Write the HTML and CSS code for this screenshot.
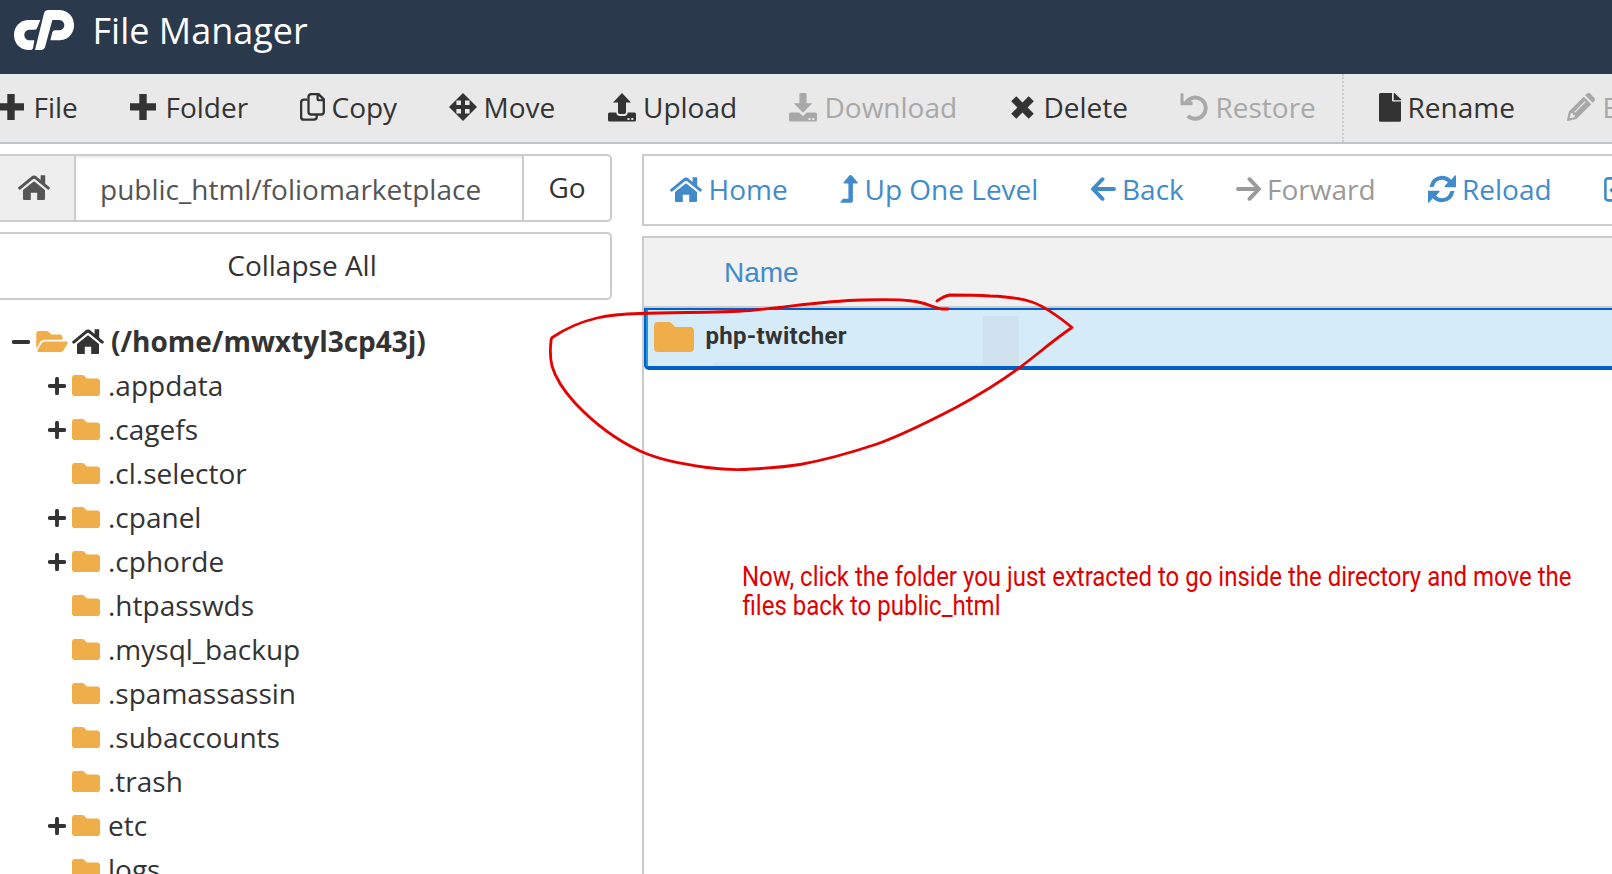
FILE: index.html
```html
<!DOCTYPE html>
<html lang="en">
<head>
<meta charset="utf-8">
<title>File Manager</title>
<link rel="stylesheet" href="styles.css">
</head>
<body>
<svg class="sprite" aria-hidden="true">
  <symbol id="home" viewBox="0 0 32 25"><path d="M1.7 13.1 14.2 2.8Q16 1.4 17.8 2.8L30.3 13.1" fill="none" stroke="currentColor" stroke-width="3" stroke-linecap="round"/><path d="M22.6.3h4.6v9.5l-4.6-3.7zM16 6.2 27 15v9q0 1-1 1h-6.8v-7.3h-6.4V25H6q-1 0-1-1v-9z"/></symbol>
  <symbol id="plus" viewBox="0 0 26 26"><path d="M9.3 0h7.4v9.3H26v7.2h-9.3V26H9.3v-9.5H0V9.3h9.3z"/></symbol>
  <symbol id="copy" viewBox="0 0 25 28"><g fill="none" stroke="currentColor" stroke-width="2.3"><path d="M7.5 6.6H4Q1.1 6.6 1.1 9.5v14.6q0 2.6 2.8 2.6h10q2.8 0 2.8-2.6v-2.3"/><path d="M11.4 1.2h7.2l5.2 5v12.5q0 2.8-2.8 2.8h-9.600q-2.900 0-2.900-2.800V4q0-2.800 2.900-2.800z"/></g><path d="M16.500 1.500h2.300l5 4.800v2h-5q-2.300 0-2.300-2.300z"/><path class="paper" d="M18.700 3v2.200q0 1 1 1h2.200z"/></symbol>
  <symbol id="move" viewBox="0 0 28 28"><path d="M14 0 28 14 14 28 0 14z"/><path class="hole" d="M7.400 7.400h4.600v4.600H7.400zM16 7.400h4.600v4.600H16zM7.400 16h4.600v4.600H7.400zM16 16h4.600v4.600H16z"/></symbol>
  <symbol id="upload" viewBox="0 0 28 29"><path d="M14 0 23 9.600H18V19.300q0 1.700-1.700 1.700h-4.600q-1.700 0-1.700-1.700V9.600H5zM1.500 19.600h6.700q.5 3.400 3.500 3.400h4.600q3 0 3.500-3.400h6.700q1.500 0 1.500 1.500v6q0 1.500-1.500 1.500h-25q-1.500 0-1.500-1.500v-6q0-1.500 1.500-1.500z"/><path class="hole" d="M19.500 25h2v2h-2zM23.300 25h2v2h-2z"/></symbol>
  <symbol id="download" viewBox="0 0 28 29"><path d="M11.600 0h4.800q1.200 0 1.200 1.200v9.100h5.600L14 19.700 4.800 10.300h5.600V1.200q0-1.200 1.200-1.200zM1.500 19.600h8.700l3.800 3.600 3.800-3.600h8.700q1.500 0 1.500 1.500v6q0 1.500-1.500 1.500h-25q-1.500 0-1.500-1.500v-6q0-1.500 1.500-1.500z"/><path class="hole" d="M19.500 25h2v2h-2zM23.300 25h2v2h-2z"/></symbol>
  <symbol id="delete" viewBox="0 0 23 23"><path d="M5.300.2 11.500 6.500 17.700.2 22.800 5.300 16.600 11.500 22.800 17.700 17.700 22.800 11.500 16.500 5.300 22.800.2 17.700 6.400 11.500.2 5.300z"/></symbol>
  <symbol id="restore" viewBox="0 0 28 28"><path d="M6.500 9A10.600 10.600 0 1 1 7.800 22.800" fill="none" stroke="currentColor" stroke-width="3.900"/><path d="M.5.300h2.200q.800 0 .800.800v7.200h8.200q.8 0 .8.800v2.300q0 .8-.8.800H.5z"/></symbol>
  <symbol id="file" viewBox="0 0 22 29"><path d="M1.600 0H13v7.600q0 1 1 1h8v18.600q0 1.500-1.500 1.500h-19Q0 28.700 0 27.200V1.500Q0 0 1.600 0zM14.700 0h.8L22 6.300v.9h-7.300z"/></symbol>
  <symbol id="edit" viewBox="0 0 28 28"><path fill-rule="evenodd" d="M1.900 18.600 16.800 3.700l7.500 7.500L9.400 26.100 1 27.900Q0 28 0 27zM3.800 20.300l-1 4.900 4.900-1v-2.300H6v-1.700zM8 19.800l10.800-10.800-.9-.9L7.100 18.900z"/><path d="M18.200 2.300 20.100.5q1.500-1.200 3 0L27.500 4.900q1.200 1.500 0 3l-1.800 1.900z"/></symbol>
  <symbol id="levelup" viewBox="0 0 18 28"><path d="M10.500 0q.8 0 1.300.6l5.800 6.600q.8 1.200-.5 1.200h-4.200V26q0 1.800-1.800 1.800H1Q0 27.800.5 27l2-2.700q.5-.6 1.200-.6h4.700V8.400H4.200q-1.300 0-.5-1.200L9.300.600Q9.800 0 10.500 0z"/></symbol>
  <symbol id="left" viewBox="0 0 25 24"><path d="M23 12H2.500M11.500 2.200 2 12l9.500 9.800" fill="none" stroke="currentColor" stroke-width="3.900" stroke-linecap="round" stroke-linejoin="round"/></symbol>
  <symbol id="right" viewBox="0 0 25 24"><path d="M2 12h20.500M13.500 2.200 23 12l-9.500 9.800" fill="none" stroke="currentColor" stroke-width="3.900" stroke-linecap="round" stroke-linejoin="round"/></symbol>
  <symbol id="reload" viewBox="0 0 28 28"><path d="M1.500 12Q3.500 1.200 14 .7q5.300.1 9.300 4L26.800.400q1.200-.6 1.200.8v11h-10.800q-1.500-.2-.5-1.300L20 7.300q-2.600-2.500-6-2.500-6.500.3-8 6.400-.3.800-1 .8z"/><path d="M1.500 12Q3.500 1.200 14 .7q5.300.1 9.300 4L26.800.400q1.200-.6 1.200.8v11h-10.800q-1.500-.2-.5-1.300L20 7.300q-2.600-2.500-6-2.500-6.500.3-8 6.400-.3.800-1 .8z" transform="rotate(180 14 14)"/></symbol>
  <symbol id="check" viewBox="0 0 25 25"><rect x="1.400" y="1.400" width="22" height="22" rx="2.600" fill="none" stroke="currentColor" stroke-width="2.600"/><path d="m6.500 12 4 4 8-8" fill="none" stroke="currentColor" stroke-width="3.400"/></symbol>
  <symbol id="folder" viewBox="0 64 512 384"><path d="M464 128H272l-50-51Q208 64 190 64H48C21.500 64 0 85.500 0 112v288c0 26.500 21.500 48 48 48h416c26.500 0 48-21.500 48-48V176c0-26.500-21.500-48-48-48z"/></symbol>
  <symbol id="folder-open" viewBox="0 64 576 384"><path d="M572.700 292.100 500.300 416.200A64 64 0 0 1 445 448H45c-18.500 0-30-20.100-20.700-36.100l72.400-124.200A64 64 0 0 1 152 256h400c18.500 0 30 20.100 20.700 36.100zM152 224h328v-48c0-26.500-21.500-48-48-48H272l-50-51Q208 64 190 64H48C21.500 64 0 85.500 0 112v278l69.100-118.400C86.200 242.300 118 224 152 224z"/></symbol>
  <symbol id="expand" viewBox="0 0 18 18"><path d="M9 1.800v14.400M1.800 9h14.400" stroke="currentColor" stroke-width="3.900" stroke-linecap="round"/></symbol>
  <symbol id="collapse" viewBox="0 0 18 18"><path d="M1.800 9h14.400" stroke="currentColor" stroke-width="3.900" stroke-linecap="round"/></symbol>
</svg>

<header class="header">
  <svg class="logo" viewBox="42 30 180 120"><path d="M121 60 111 85Q110 89 104 89H88C68 90 68 120 88 121h15L99 145Q97 150 92 150H84C28 146 28 64 84 60zM105 150 132 40Q135 30 146 30h34C236 34 236 117 180 121h-29l6-24Q159 91 165 91h13C198 89 198 62 178 60h-21L135 142Q132 150 125 150z"/></svg>
  <h1 class="title">File Manager</h1>
</header>

<nav class="toolbar">
  <a class="tool wide-gap"><svg class="i26"><use href="#plus"/></svg><span>File</span></a>
  <a class="tool wide-gap"><svg class="i26"><use href="#plus"/></svg><span>Folder</span></a>
  <a class="tool"><svg class="i-copy"><use href="#copy"/></svg><span>Copy</span></a>
  <a class="tool"><svg class="i28"><use href="#move"/></svg><span>Move</span></a>
  <a class="tool disk"><svg class="i-disk"><use href="#upload"/></svg><span>Upload</span></a>
  <a class="tool disk off"><svg class="i-disk"><use href="#download"/></svg><span>Download</span></a>
  <a class="tool wide-gap"><svg class="i23"><use href="#delete"/></svg><span>Delete</span></a>
  <a class="tool disk off"><svg class="i28"><use href="#restore"/></svg><span>Restore</span></a>
  <a class="tool divided"><svg class="i-file"><use href="#file"/></svg><span>Rename</span></a>
  <a class="tool disk off"><svg class="i28"><use href="#edit"/></svg><span>Edit</span></a>
</nav>

<main class="main">
  <aside class="side">
    <div class="path">
      <span class="path-home"><svg class="i-home"><use href="#home"/></svg></span>
      <span class="path-input">public_html/foliomarketplace</span>
      <span class="path-go">Go</span>
    </div>
    <div class="collapse">Collapse All</div>
    <ul class="tree">
      <li class="node root"><svg class="i18 toggle"><use href="#collapse"/></svg><svg class="i-open"><use href="#folder-open"/></svg><svg class="i-home"><use href="#home"/></svg><span>(/home/mwxtyl3cp43j)</span></li>
      <li class="node"><svg class="i18 toggle"><use href="#expand"/></svg><svg class="i-folder"><use href="#folder"/></svg><span>.appdata</span></li>
      <li class="node"><svg class="i18 toggle"><use href="#expand"/></svg><svg class="i-folder"><use href="#folder"/></svg><span>.cagefs</span></li>
      <li class="node leaf"><svg class="i-folder"><use href="#folder"/></svg><span>.cl.selector</span></li>
      <li class="node"><svg class="i18 toggle"><use href="#expand"/></svg><svg class="i-folder"><use href="#folder"/></svg><span>.cpanel</span></li>
      <li class="node"><svg class="i18 toggle"><use href="#expand"/></svg><svg class="i-folder"><use href="#folder"/></svg><span>.cphorde</span></li>
      <li class="node leaf"><svg class="i-folder"><use href="#folder"/></svg><span>.htpasswds</span></li>
      <li class="node leaf"><svg class="i-folder"><use href="#folder"/></svg><span>.mysql_backup</span></li>
      <li class="node leaf"><svg class="i-folder"><use href="#folder"/></svg><span>.spamassassin</span></li>
      <li class="node leaf"><svg class="i-folder"><use href="#folder"/></svg><span>.subaccounts</span></li>
      <li class="node leaf"><svg class="i-folder"><use href="#folder"/></svg><span>.trash</span></li>
      <li class="node"><svg class="i18 toggle"><use href="#expand"/></svg><svg class="i-folder"><use href="#folder"/></svg><span>etc</span></li>
      <li class="node leaf"><svg class="i-folder"><use href="#folder"/></svg><span>logs</span></li>
    </ul>
  </aside>

  <section class="content">
    <nav class="actions">
      <a class="tool"><svg class="i-home"><use href="#home"/></svg><span>Home</span></a>
      <a class="tool"><svg class="i-up"><use href="#levelup"/></svg><span>Up One Level</span></a>
      <a class="tool"><svg class="i-arrow"><use href="#left"/></svg><span>Back</span></a>
      <a class="tool muted"><svg class="i-arrow"><use href="#right"/></svg><span>Forward</span></a>
      <a class="tool"><svg class="i28"><use href="#reload"/></svg><span>Reload</span></a>
      <a class="tool"><svg class="i25"><use href="#check"/></svg></a>
    </nav>
    <div class="table">
      <div class="table-head">Name</div>
      <div class="row">
        <div class="row-body"><svg class="i-big"><use href="#folder"/></svg><span class="row-name">php-twitcher</span></div>
        <span class="shade-tall"></span><span class="shade-low"></span>
      </div>
    </div>
  </section>
</main>

<svg class="notes" viewBox="0 0 1612 874">
  <path d="M948 309H942C933 308 925 302 912 301C900 299.500 880 299.500 863 300C820 301 790 307 750 310.500C715 313 680 312 640 313.500C622 314 612 314.500 597 318C580 322 565 329 553 337Q551 338 551 341C550 350 550 358 552 366C556 380 565 392 575 403C591 420 610 437 640 451C660 460 680 463.500 707 467.500C722 469.500 738 470 752 469C770 468 785 467 800 464.500C825 460 850 453 877 444C905 434 930 421 955 408C985 392 1005 379 1027 362C1040 352 1055 339 1072 327.500C1058 316 1046 307 1032 302C1020 298 1005 296.500 990 296C975 295 962 295 950 295Q944 296 937 301"/>
  <text x="742" y="585.700" textLength="829.500" lengthAdjust="spacingAndGlyphs">Now, click the folder you just extracted to go inside the directory and move the</text>
  <text x="742.500" y="614.700" textLength="258" lengthAdjust="spacingAndGlyphs">files back to public_html</text>
</svg>
</body>
</html>
```
FILE: styles.css
```css
* { box-sizing: border-box; }

body {
  margin: 0;
  width: 1612px;
  height: 874px;
  overflow: hidden;
  position: relative;
  background: #fff;
  color: #333;
  font: 28px/44px "Open Sans", "Noto Sans", sans-serif;
}

svg { display: block; flex: none; fill: currentColor; }
.sprite { display: none; }
.hole, .paper { fill: #e9e9e9; }

.i18 { width: 18px; height: 18px; }
.i23 { width: 23px; height: 23px; }
.i25 { width: 25px; height: 25px; }
.i26 { width: 26px; height: 26px; }
.i28 { width: 28px; height: 28px; }
.i-copy { width: 25px; height: 28px; }
.i-disk { width: 28px; height: 29px; }
.i-file { width: 22px; height: 29px; }
.i-home { width: 32px; height: 25px; }
.i-up { width: 18px; height: 28px; }
.i-arrow { width: 25px; height: 24px; }
.i-folder { width: 28px; height: 21px; color: #f0ae4b; }
.i-open { width: 32px; height: 21px; color: #f0ae4b; }
.i-big { width: 40px; height: 30px; color: #f0ae4b; }

.header {
  height: 74px;
  padding: 0 0 14px 14px;
  display: flex;
  align-items: center;
  gap: 18.500px;
  background: #2b394c;
  color: #fff;
}
.logo { width: 60px; height: 40px; }
.title { margin: 0; padding-top: 2px; font-size: 36px; font-weight: 400; line-height: 48px; }

.toolbar {
  height: 70px;
  margin-left: -2px;
  display: grid;
  grid-template-columns: 132px 170px 149px 158.500px 181.500px 222px 169px 162px 225px 80px;
  background: #e9e9e9;
  border-bottom: 2px solid #c0c5ca;
}
.tool {
  display: flex;
  align-items: center;
  gap: 6.500px;
  padding-bottom: 2px;
  white-space: nowrap;
}
.disk { gap: 7.500px; }
.wide-gap { gap: 9.500px; }
.off { color: #a8a8a8; }
.muted { color: #999; }
.divided { border-left: 2px dotted #ccc; padding-left: 35px; }

.main { display: flex; gap: 30px; padding-top: 10px; height: 730px; }

.side { width: 612px; }
.path {
  height: 68px;
  display: flex;
  border: 2px solid #ccc;
  border-left: 0;
  border-radius: 0 5px 5px 0;
}
.path-home {
  width: 76px;
  padding: 0 6px 1px 0;
  display: flex;
  align-items: center;
  justify-content: center;
  background: #eee;
  border-right: 2px solid #ccc;
  color: #555;
}
.path-input {
  width: 448px;
  padding: 2px 0 0 24px;
  line-height: 62px;
  border-right: 2px solid #ccc;
  box-shadow: inset 0 2px 2px rgba(0, 0, 0, .075);
  color: #555;
}
.path-go { flex: 1; text-align: center; line-height: 62px; }
.collapse {
  height: 68px;
  margin: 10px 0 0 -8px;
  border: 2px solid #ccc;
  border-radius: 5px;
  line-height: 62px;
  text-align: center;
}
.tree { list-style: none; margin: 19px 0 0; padding: 0; }
.node { height: 44px; display: flex; align-items: center; padding-left: 48px; gap: 6px; }
.node span { padding-left: 2px; }
.toggle { margin-top: 1px; }
.leaf { padding-left: 72px; }
.root { padding-left: 12px; font-weight: 700; gap: 5px; }
.root .i-open { margin: 0 -1px 0 1px; }

.content { flex: 1; min-width: 0; display: flex; flex-direction: column; overflow: hidden; }
.actions {
  width: 1100px;
  height: 72px;
  border: 2px solid #ccc;
  padding-left: 26px;
  display: grid;
  grid-template-columns: 170px 250.500px 145px 192px 176.500px 60px;
  color: #428bca;
}
.table {
  flex: 1;
  margin-top: 10px;
  border: 2px solid #ccc;
  border-right: 0;
  border-bottom: 0;
}
.table-head {
  height: 70px;
  padding: 1px 0 0 80px;
  border-bottom: 2px solid #ccc;
  background: #f1f1f1;
  color: #428bca;
  font: 28px/67px "Liberation Sans", sans-serif;
}
.row {
  position: relative;
  height: 62px;
  border: solid #005fcc;
  border-width: 2px 0 4px 2px;
  border-radius: 0 0 0 5px;
  background: #d6ebf8;
}
.row-body {
  height: 56px;
  display: flex;
  align-items: center;
  gap: 11.500px;
  padding: 0 0 3px 6px;
  border-left: 2px solid #1a9ad6;
}
.row-name { padding-bottom: 2px; font: 700 24px/30px Roboto, sans-serif; letter-spacing: .3px; }
.shade-tall { position: absolute; left: 337px; top: 6px; width: 36px; height: 50px; background: #d0e1ef; }
.shade-low { position: absolute; left: 67px; top: 53px; width: 270px; height: 3px; background: #d0e4f1; }

.notes { position: absolute; left: 0; top: 0; width: 1612px; height: 874px; pointer-events: none; }
.notes path { fill: none; stroke: #e60000; stroke-width: 2.800; stroke-linecap: round; stroke-linejoin: round; }
.notes text { fill: #e00000; font: 28.500px Roboto, sans-serif; }
```
